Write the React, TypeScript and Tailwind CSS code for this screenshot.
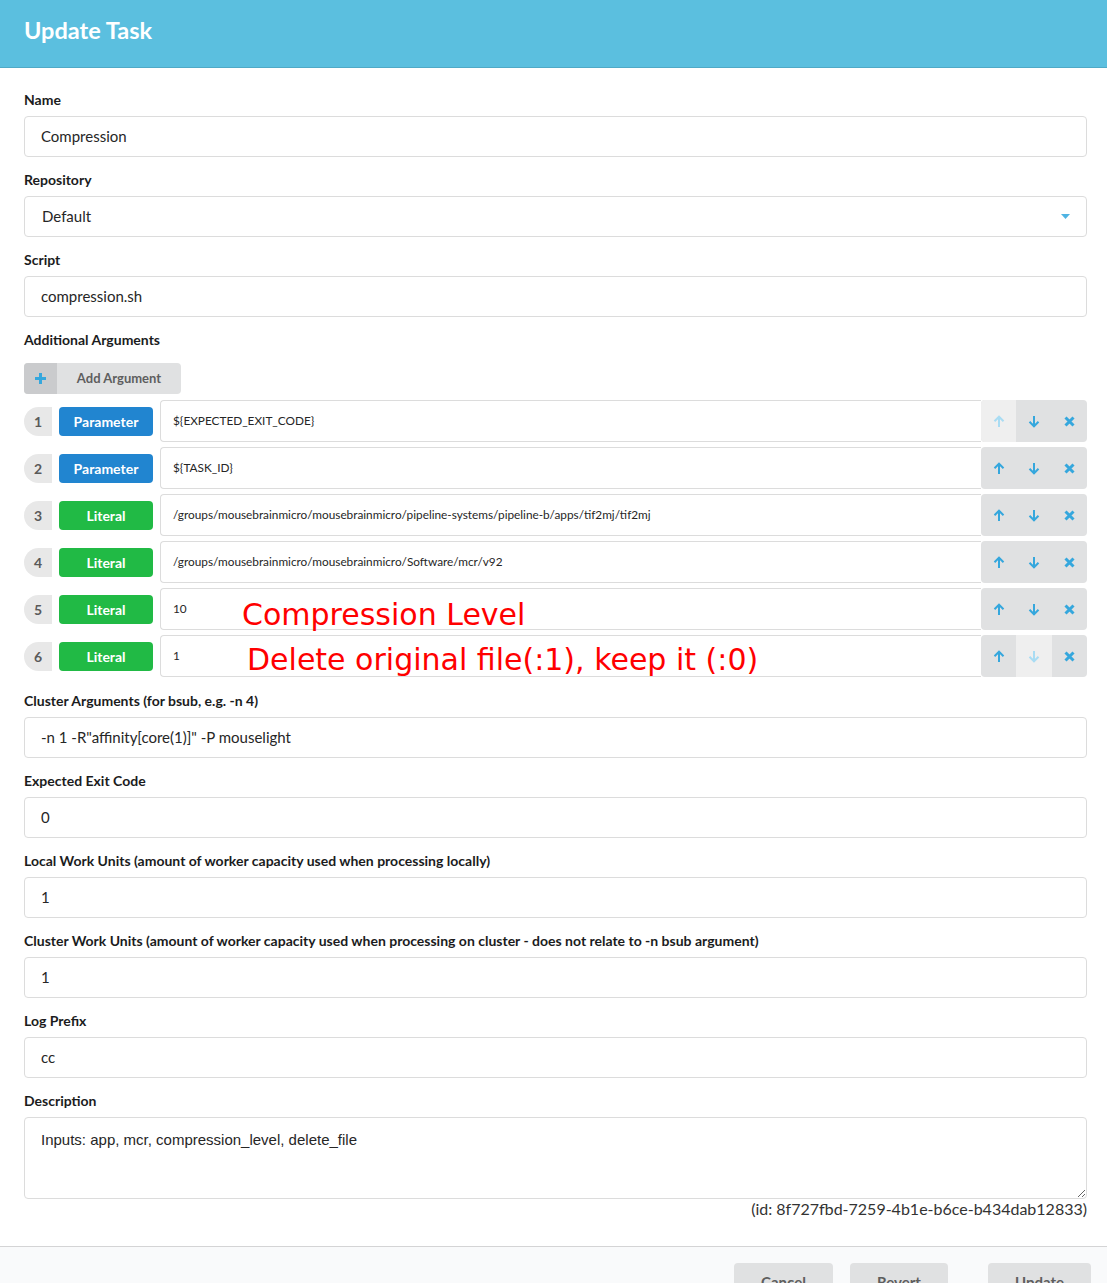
import React from "react";

const lato = { fontFamily: "Lato, 'Noto Sans', sans-serif" };

function Label({ children }: { children: React.ReactNode }) {
  return (
    <div className="block mb-[7px] leading-[18px] text-[14px] font-bold text-[#1b1c1d]">{children}</div>
  );
}

function TextInput({ value }: { value: string }) {
  return (
    <div className="h-[41px] flex items-center border border-[#dcdcdc] rounded-[4px] px-[16px] text-[15px] text-[#262626] bg-white">
      {value}
    </div>
  );
}

function Field({ label, value }: { label: string; value: string }) {
  return (
    <div className="mb-[14px]">
      <Label>{label}</Label>
      <TextInput value={value} />
    </div>
  );
}

function ArrowUp({ color }: { color: string }) {
  return (
    <svg width="12" height="13" viewBox="0 0 12 13" fill="none">
      <path d="M6 12V2" stroke={color} strokeWidth="2" />
      <path d="M1.5 6.2L6 1.7l4.5 4.5" stroke={color} strokeWidth="2" fill="none" />
    </svg>
  );
}

function ArrowDown({ color }: { color: string }) {
  return (
    <svg width="12" height="13" viewBox="0 0 12 13" fill="none">
      <path d="M6 1v10" stroke={color} strokeWidth="2" />
      <path d="M1.5 6.8L6 11.3l4.5-4.5" stroke={color} strokeWidth="2" fill="none" />
    </svg>
  );
}

function XIcon({ color }: { color: string }) {
  return (
    <svg width="11" height="11" viewBox="0 0 11 11" fill="none">
      <path d="M1.5 1.5l8 8M9.5 1.5l-8 8" stroke={color} strokeWidth="3" />
    </svg>
  );
}

type Arg = {
  n: number;
  kind: "Parameter" | "Literal";
  value: string;
  upDisabled?: boolean;
  downDisabled?: boolean;
  note?: { text: string; left: number; top: number };
};

const args: Arg[] = [
  { n: 1, kind: "Parameter", value: "${EXPECTED_EXIT_CODE}", upDisabled: true },
  { n: 2, kind: "Parameter", value: "${TASK_ID}" },
  { n: 3, kind: "Literal", value: "/groups/mousebrainmicro/mousebrainmicro/pipeline-systems/pipeline-b/apps/tif2mj/tif2mj" },
  { n: 4, kind: "Literal", value: "/groups/mousebrainmicro/mousebrainmicro/Software/mcr/v92" },
  { n: 5, kind: "Literal", value: "10", note: { text: "Compression Level", left: 81, top: 11 } },
  { n: 6, kind: "Literal", value: "1", downDisabled: true, note: { text: "Delete original file(:1), keep it (:0)", left: 86, top: 9 } },
];

const BLUE = "#35a7dd";
const LIGHT = "#a9dcf3";

function ArgRow({ a }: { a: Arg }) {
  return (
    <div className="flex items-center h-[42px]">
      <div className="w-[28px] h-[29px] rounded-l-full bg-[#e8e8e8] flex items-center justify-center text-[14px] font-bold text-[#5a5a5a]">
        {a.n}
      </div>
      <div
        className={
          "ml-[7px] w-[94px] h-[29px] rounded-[4px] flex items-center justify-center text-white text-[14px] font-bold " +
          (a.kind === "Parameter" ? "bg-[#2185d0]" : "bg-[#21ba45]")
        }
      >
        {a.kind}
      </div>
      <div className="relative ml-[7px] flex-1 h-[42px] border border-[#dcdcdc] border-r-0 rounded-l-[4px] flex items-center pl-[12px] text-[11.8px] text-[#262626] bg-white">
        {a.value}
        {a.note && (
          <span
            className="absolute whitespace-nowrap text-[30px] leading-none text-[#ff0000]"
            style={{ left: a.note.left, top: a.note.top, fontFamily: "'DejaVu Sans', sans-serif" }}
          >
            {a.note.text}
          </span>
        )}
      </div>
      <div className="w-[106px] h-[42px] flex rounded-[4px] overflow-hidden bg-[#e0e1e2]">
        <div className={"flex-1 flex items-center justify-center " + (a.upDisabled ? "bg-[#efefef]" : "")}>
          <ArrowUp color={a.upDisabled ? LIGHT : BLUE} />
        </div>
        <div className={"flex-1 flex items-center justify-center " + (a.downDisabled ? "bg-[#efefef]" : "")}>
          <ArrowDown color={a.downDisabled ? LIGHT : BLUE} />
        </div>
        <div className="flex-1 flex items-center justify-center">
          <XIcon color={BLUE} />
        </div>
      </div>
    </div>
  );
}

export default function App() {
  return (
    <div className="w-[1107px] h-[1283px] overflow-hidden bg-white" style={lato}>
      <div className="h-[68px] bg-[#5bbfdf] border-b border-[#4fa9c6] flex items-center px-[24px] pb-[5px]">
        <h1 className="text-[23.5px] font-bold text-white leading-none">Update Task</h1>
      </div>

      <div className="px-[24px] pt-[23px] pr-[20px]">
        <Field label="Name" value="Compression" />
        <div className="mb-[14px]">
          <Label>Repository</Label>
          <div className="h-[41px] flex items-center justify-between border border-[#dcdcdc] rounded-[4px] pl-[17px] pr-[16px] text-[15px] text-[#262626]">
            <span>Default</span>
            <svg width="9" height="5" viewBox="0 0 9 5">
              <path d="M0 0h9L4.5 5z" fill="#4fb4e3" />
            </svg>
          </div>
        </div>
        <Field label="Script" value="compression.sh" />

        <div className="mb-[15px]">
          <div className="leading-[18px] text-[14px] font-bold text-[#1b1c1d] mb-[14px]">Additional Arguments</div>
          <div className="inline-flex h-[31px] rounded-[4px] overflow-hidden bg-[#e0e1e2] mb-[6px]">
            <div className="w-[33px] bg-[#cacbcd] flex items-center justify-center">
              <svg width="11" height="11" viewBox="0 0 11 11">
                <path d="M5.5 0v11M0 5.5h11" stroke="#35a7dd" strokeWidth="3" />
              </svg>
            </div>
            <div className="w-[124px] flex items-center justify-center text-[13px] font-bold text-[#5e5e5e]">
              Add Argument
            </div>
          </div>
          <div className="flex flex-col gap-[5px]">
            {args.map((a) => (
              <ArgRow key={a.n} a={a} />
            ))}
          </div>
        </div>

        <Field label="Cluster Arguments (for bsub, e.g. -n 4)" value={'-n 1 -R"affinity[core(1)]" -P mouselight'} />
        <Field label="Expected Exit Code" value="0" />
        <Field label="Local Work Units (amount of worker capacity used when processing locally)" value="1" />
        <Field
          label="Cluster Work Units (amount of worker capacity used when processing on cluster - does not relate to -n bsub argument)"
          value="1"
        />
        <Field label="Log Prefix" value="cc" />

        <div>
          <Label>Description</Label>
          <textarea
            readOnly
            defaultValue="Inputs: app, mcr, compression_level, delete_file"
            className="block w-full h-[82px] border border-[#dcdcdc] rounded-[4px] px-[16px] py-[11px] text-[15px] text-[#262626] outline-none"
            style={{ fontFamily: "'Liberation Sans', Arial, sans-serif" }}
          />
          <div className="text-right text-[16px] text-[#333] leading-[20px]">
            (id: 8f727fbd-7259-4b1e-b6ce-b434dab12833)
          </div>
        </div>
      </div>

      <div className="mt-[27px] border-t border-[#d4d4d5] bg-[#f9fafb] h-[80px] flex justify-end pt-[16px] pr-[16px]">
        <button className="w-[99px] h-[38px] rounded-[4px] bg-[#e0e1e2] text-[15px] font-bold text-[#5e5e5e]">Cancel</button>
        <button className="ml-[17px] w-[98px] h-[38px] rounded-[4px] bg-[#e0e1e2] text-[15px] font-bold text-[#5e5e5e]">Revert</button>
        <button className="ml-[40px] w-[103px] h-[38px] rounded-[4px] bg-[#e0e1e2] text-[15px] font-bold text-[#5e5e5e]">Update</button>
      </div>
    </div>
  );
}
